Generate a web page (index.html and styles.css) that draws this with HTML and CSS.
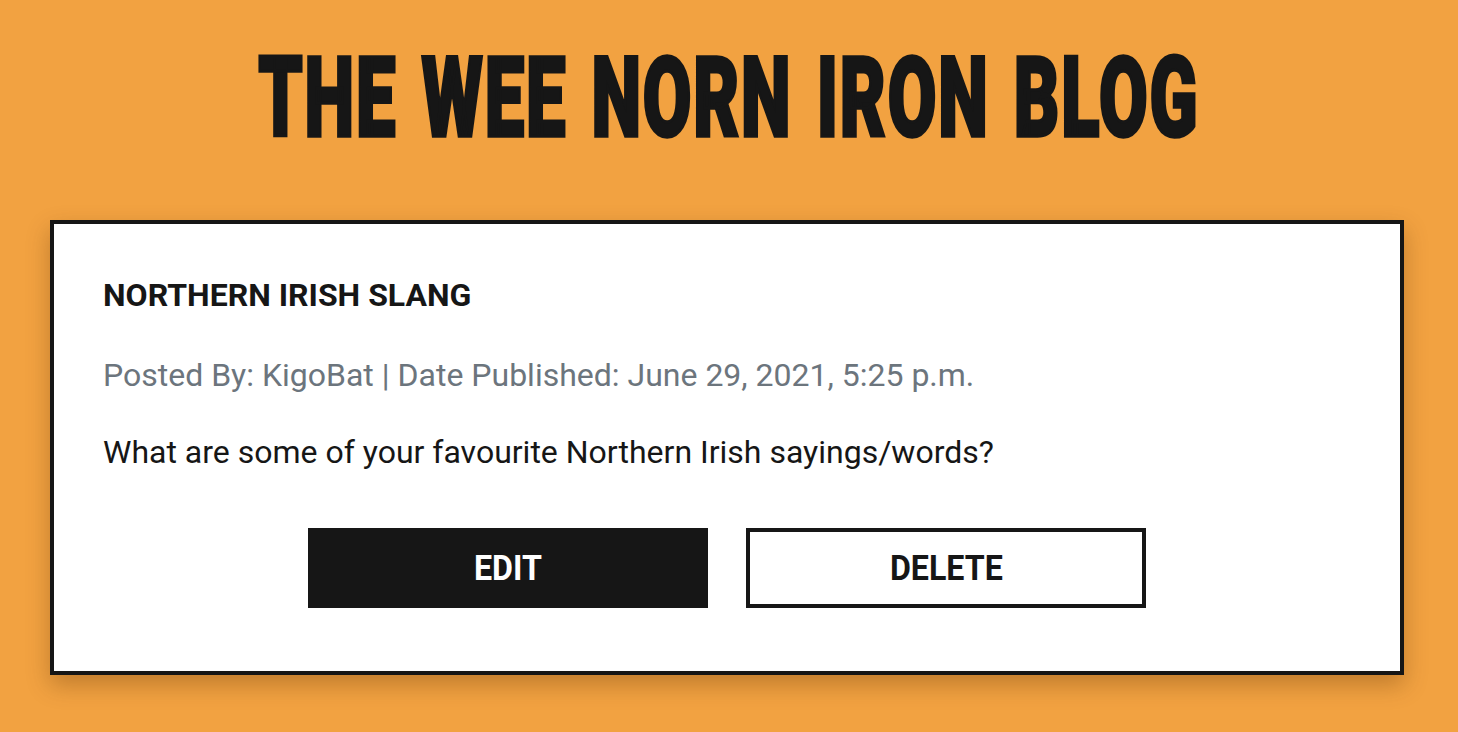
FILE: index.html
```html
<!DOCTYPE html>
<html lang="en">
<head>
<meta charset="utf-8">
<title>The Wee Norn Iron Blog</title>
<link rel="stylesheet" href="styles.css">
</head>
<body>
<header class="site-header">
  <h1 class="site-title"><span class="site-title-text">THE WEE NORN IRON BLOG</span></h1>
</header>
<main class="content">
  <article class="post-card">
    <h2 class="post-title">NORTHERN IRISH SLANG</h2>
    <p class="post-meta">Posted By: KigoBat | Date Published: June 29, 2021, 5:25 p.m.</p>
    <p class="post-body">What are some of your favourite Northern Irish sayings/words?</p>
    <div class="post-actions">
      <a class="btn btn-dark" href="#"><span class="btn-label">EDIT</span></a>
      <a class="btn btn-outline" href="#"><span class="btn-label">DELETE</span></a>
    </div>
  </article>
</main>
</body>
</html>
```
FILE: styles.css
```css
* { box-sizing: border-box; }
html, body { margin: 0; padding: 0; }
body {
  background: #f2a241;
  font-family: Roboto, "Liberation Sans", sans-serif;
  color: #161616;
  height: 732px;
  overflow: hidden;
}
.site-header {
  display: flex;
  justify-content: center;
  padding-top: 42px;
  height: 220px;
}
.site-title {
  margin: 0;
  font-size: 112px;
  font-weight: 900;
  line-height: 112px;
  color: #161616;
  letter-spacing: 2.8px;
  word-spacing: 8px;
}
.site-title-text {
  display: inline-block;
  transform: scaleX(0.63);
  transform-origin: center;
  white-space: nowrap;
  -webkit-text-stroke: 3.5px #161616;
}
.content {
  padding: 0 54px 0 50px;
}
.post-card {
  background: #fff;
  border: 4px solid #161616;
  box-shadow: 0 10px 22px rgba(80, 40, 0, 0.3);
  padding: 52px 49px 63px;
}
.post-title {
  margin: 0;
  font-size: 32px;
  font-weight: 700;
  line-height: 38px;
  color: #161616;
}
.post-meta {
  margin: 42px 0 0;
  font-size: 32px;
  line-height: 38px;
  color: #6c757d;
}
.post-body {
  margin: 39px 0 0;
  font-size: 32px;
  line-height: 38px;
  color: #161616;
}
.post-actions {
  display: flex;
  justify-content: center;
  gap: 38px;
  margin-top: 57px;
}
.btn {
  display: flex;
  align-items: center;
  justify-content: center;
  width: 400px;
  height: 80px;
  text-decoration: none;
  font-size: 35px;
  font-weight: 700;
}
.btn-label {
  display: inline-block;
  transform: scaleX(0.92);
}
.btn-dark {
  background: #161616;
  color: #fff;
}
.btn-outline {
  background: #fff;
  color: #161616;
  border: 4px solid #161616;
}
```
